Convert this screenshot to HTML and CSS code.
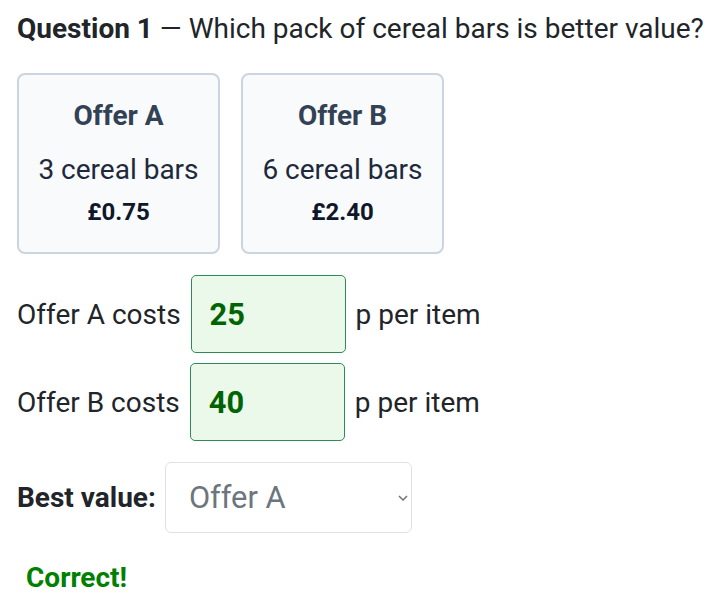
FILE: index.html
```html
<!DOCTYPE html>
<html lang="en">
<head>
  <meta charset="UTF-8" />
  <meta name="viewport" content="width=device-width, initial-scale=1.0"/>
  <title>Question 1 | Better Value</title>
  <link rel="stylesheet" href="styles.css">
</head>
<body>

  <main class="question">
    <h1 class="question-title"><strong>Question 1</strong> — Which pack of cereal bars is better value?</h1>

    <div class="offer-grid">
      <div class="offer-card">
        <div class="offer-name">Offer A</div>
        <div class="offer-qty">3 cereal bars</div>
        <div class="offer-price">£0.75</div>
      </div>
      <div class="offer-card">
        <div class="offer-name">Offer B</div>
        <div class="offer-qty">6 cereal bars</div>
        <div class="offer-price">£2.40</div>
      </div>
    </div>

    <div class="answer-row">
      <label for="costA">Offer A costs</label>
      <input type="text" id="costA" class="answer-input correct" value="25">
      <span>p per item</span>
    </div>

    <div class="answer-row">
      <label for="costB">Offer B costs</label>
      <input type="text" id="costB" class="answer-input correct" value="40">
      <span>p per item</span>
    </div>

    <div class="answer-row best-row">
      <label for="best" class="best-label">Best value:</label>
      <select id="best" class="best-select">
        <option>Offer A</option>
        <option>Offer B</option>
      </select>
    </div>

    <p class="feedback">Correct!</p>
  </main>

</body>
</html>
```

FILE: styles.css
```css
body {
  margin: 0;
  font-family: Roboto, "Liberation Sans", Arial, sans-serif;
  font-size: 28px;
  color: #212529;
  background-color: #ffffff;
}

.question {
  padding: 12px 17px;
}

.question-title {
  font-size: 28px;
  font-weight: 400;
  margin: 0 0 27px;
  line-height: 34px;
  white-space: nowrap;
}

.question-title strong {
  font-weight: 700;
}

/* Offer cards */
.offer-grid {
  display: flex;
  gap: 21px;
  margin-bottom: 21px;
}

.offer-card {
  width: 203px;
  height: 181px;
  box-sizing: border-box;
  background-color: #f8fafc;
  border: 2px solid #cbd5e1;
  border-radius: 8px;
  padding: 24px 6px 0;
  text-align: center;
}

.offer-name {
  font-size: 28px;
  font-weight: 700;
  color: #334155;
  line-height: 34px;
  margin-bottom: 20px;
}

.offer-qty {
  font-size: 28px;
  line-height: 34px;
  color: #1e293b;
  margin-bottom: 10px;
}

.offer-price {
  font-size: 24px;
  font-weight: 700;
  color: #0f172a;
  line-height: 30px;
}

/* Answer rows */
.answer-row {
  display: flex;
  align-items: center;
  gap: 10px;
  margin-bottom: 10px;
}

.answer-input {
  width: 155px;
  height: 78px;
  box-sizing: border-box;
  border: 1px solid #2e8b57;
  border-radius: 5px;
  background-color: #ebf9eb;
  padding: 0 18px;
  font-family: inherit;
  font-size: 30.8px;
  font-weight: 700;
  color: #006400;
}

.best-row {
  margin-top: 21px;
  margin-bottom: 0;
  gap: 9px;
}

.best-label {
  font-weight: 700;
}

.best-select {
  width: 247px;
  height: 71px;
  box-sizing: border-box;
  border: 1px solid #dee2e6;
  border-radius: 6px;
  background-color: #ffffff;
  padding: 0 23px;
  font-family: inherit;
  font-size: 30.8px;
  color: #6c757d;
  appearance: none;
  background-image: url("data:image/svg+xml,%3Csvg xmlns='http://www.w3.org/2000/svg' viewBox='0 0 10 6'%3E%3Cpath d='M1 1l4 4 4-4' fill='none' stroke='%236c757d' stroke-width='1.5'/%3E%3C/svg%3E");
  background-repeat: no-repeat;
  background-position: right 3px center;
  background-size: 10px 6px;
}

.feedback {
  margin: 28px 0 0 9px;
  font-size: 28px;
  line-height: 34px;
  font-weight: 700;
  color: #008000;
}
```
